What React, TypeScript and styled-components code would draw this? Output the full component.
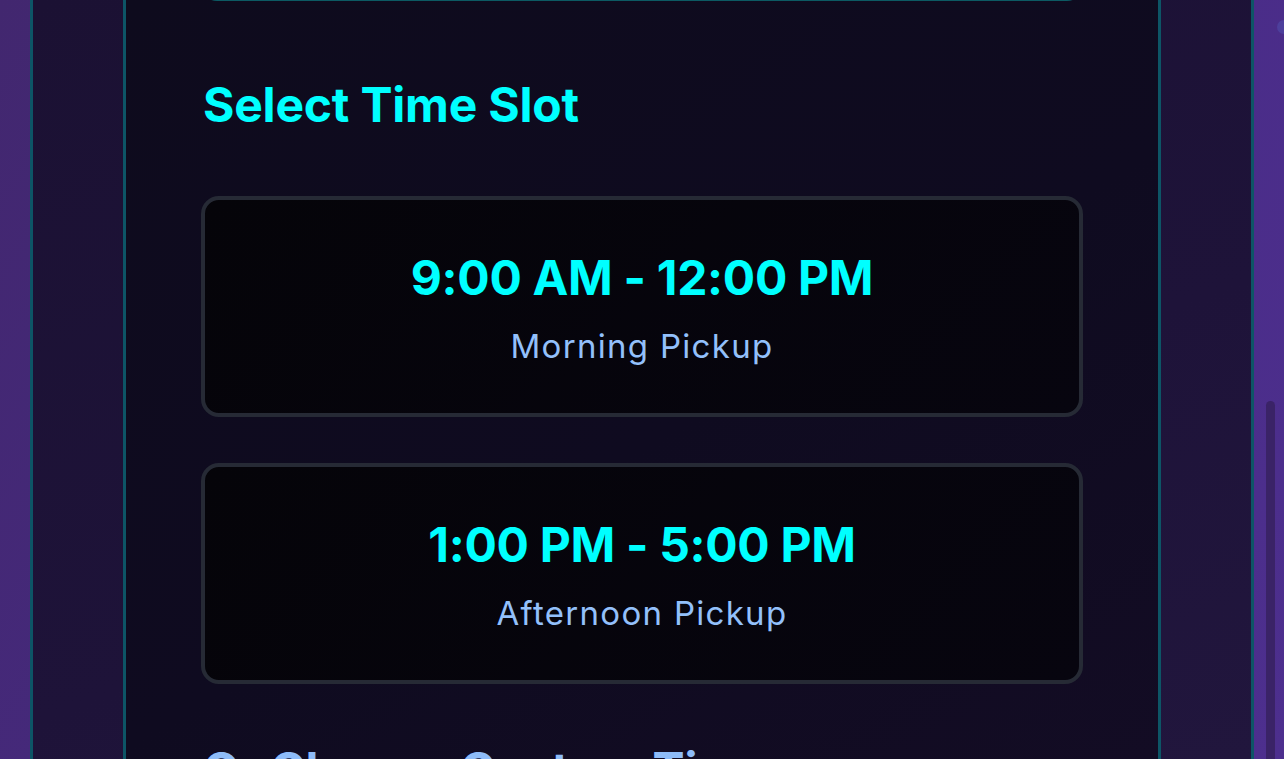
import React from "react";
import styled, { createGlobalStyle } from "styled-components";

const Global = createGlobalStyle`
  html, body {
    margin: 0;
    padding: 0;
    height: 100%;
    overflow: hidden;
  }
  body {
    font-family: Inter, "Noto Sans", "Liberation Sans", sans-serif;
    background: #46297f;
  }
  #root { height: 100%; }
`;

const Page = styled.div`
  position: relative;
  height: 759px;
  overflow: hidden;
  box-sizing: border-box;
  padding: 0 30px;
  background: linear-gradient(120deg, #42276f 0%, #482b85 55%, #4d2f8e 100%);
  display: flex;
`;

const OuterPanel = styled.div`
  flex: 1;
  box-sizing: border-box;
  border-left: 3px solid #0d5566;
  border-right: 3px solid #0d5566;
  background: linear-gradient(160deg, #1b1133 0%, #1e1339 60%, #21163d 100%);
  padding: 0 90px;
  display: flex;
`;

const InnerPanel = styled.div`
  flex: 1;
  box-sizing: border-box;
  border-left: 3px solid #0d5566;
  border-right: 3px solid #0d5566;
  background: linear-gradient(150deg, #0e0b1d 0%, #0f0b20 55%, #130c24 100%);
  padding: 0 75px;
  display: flex;
  flex-direction: column;
  & > * {
    flex-shrink: 0;
  }
`;

const PrevField = styled.div`
  height: 40px;
  margin-top: -39px;
  box-sizing: border-box;
  border: 2px solid #0c5a63;
  border-radius: 16px;
  background: transparent;
`;

const SectionTitle = styled.h2<{ $tone?: "cyan" | "blue"; $gap: number }>`
  margin: ${(p) => p.$gap}px 0 0;
  font-size: 48px;
  font-weight: 700;
  line-height: 58px;
  letter-spacing: -0.2px;
  padding-left: 2px;
  color: ${(p) => (p.$tone === "blue" ? "#8ebcf8" : "#00ffff")};
`;

const SlotList = styled.div`
  display: flex;
  flex-direction: column;
  gap: 46px;
  margin-top: 62px;
`;

const SlotCard = styled.button`
  all: unset;
  box-sizing: border-box;
  height: 221px;
  border: 4px solid #262a35;
  border-radius: 18px;
  background: linear-gradient(135deg, #050409 0%, #07050f 100%);
  display: flex;
  flex-direction: column;
  align-items: center;
  justify-content: center;
  gap: 19px;
  padding-top: 2px;
  cursor: pointer;
  font-family: Inter, "Noto Sans", "Liberation Sans", sans-serif;
`;

const SlotTime = styled.div`
  font-size: 48px;
  font-weight: 700;
  line-height: 58px;
  color: #00ffff;
  letter-spacing: -0.3px;
`;

const SlotLabel = styled.div`
  font-size: 33px;
  font-weight: 400;
  line-height: 40px;
  color: #93c0fb;
  letter-spacing: 1.3px;
`;

const ScrollThumb = styled.div`
  position: absolute;
  left: 1266px;
  top: 401px;
  width: 9px;
  height: 420px;
  border-radius: 5px;
  background: #3a2367;
`;

const CornerDot = styled.div`
  position: absolute;
  left: 1277px;
  top: 20px;
  width: 14px;
  height: 14px;
  border-radius: 50%;
  background: #4d3f9c;
  filter: blur(0.6px);
`;

const slots = [
  { time: "9:00 AM - 12:00 PM", label: "Morning Pickup" },
  { time: "1:00 PM - 5:00 PM", label: "Afternoon Pickup" },
];

export default function App() {
  return (
    <>
      <Global />
      <Page>
        <OuterPanel>
          <InnerPanel>
            <PrevField />
            <SectionTitle $gap={75}>Select Time Slot</SectionTitle>
            <SlotList>
              {slots.map((s) => (
                <SlotCard key={s.time}>
                  <SlotTime>{s.time}</SlotTime>
                  <SlotLabel>{s.label}</SlotLabel>
                </SlotCard>
              ))}
            </SlotList>
            <SectionTitle $tone="blue" $gap={57}>
              Or Choose Custom Time
            </SectionTitle>
          </InnerPanel>
        </OuterPanel>
        <ScrollThumb />
        <CornerDot />
      </Page>
    </>
  );
}
